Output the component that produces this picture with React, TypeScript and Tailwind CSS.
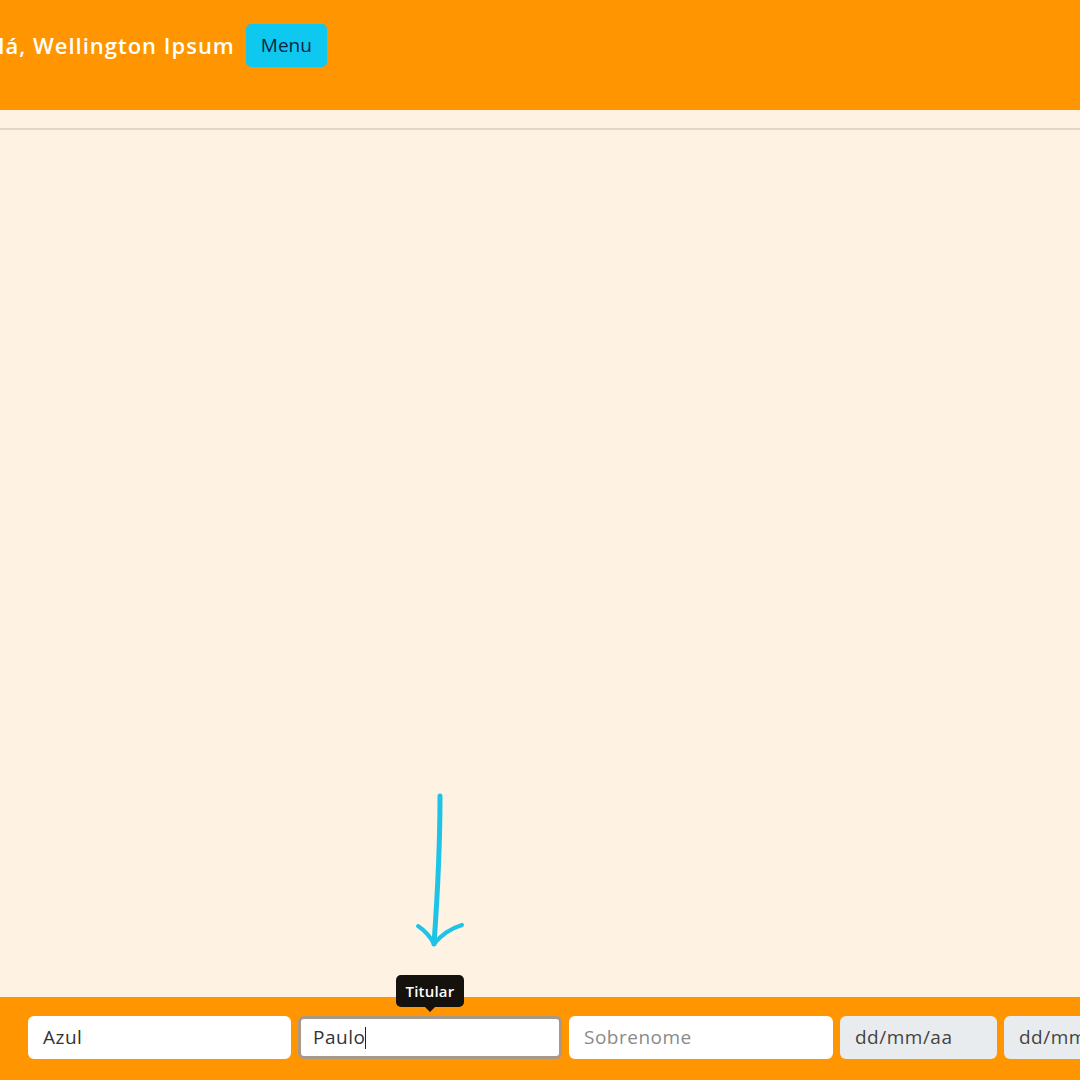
import React from "react";

export default function App() {
  const font = { fontFamily: '"Open Sans", "DejaVu Sans", sans-serif' };
  return (
    <div className="relative w-[1080px] h-[1080px] overflow-hidden bg-[#fef2e2] flex flex-col" style={font}>
      <header className="h-[110px] bg-[#ff9500] flex items-start pt-[24px] shrink-0">
        <div className="flex items-center gap-[11px] ml-[-20px]">
          <span className="text-white text-[22px] tracking-[1px] font-semibold leading-[43px] whitespace-nowrap">Olá, Wellington Ipsum</span>
          <button className="h-[43px] w-[81px] rounded-[5px] bg-[#0fc8ef] text-[#0b2545] text-[19px] flex items-center justify-center">Menu</button>
        </div>
      </header>
      <div className="h-[18px] shrink-0" />
      <div className="h-[2px] bg-[#e2d6c7] shrink-0" />
      <main className="flex-1" />
      <footer className="h-[83px] bg-[#ff9500] shrink-0 flex items-start pt-[19px] pl-[28px] gap-[7px]">
        <div className="w-[263px] h-[43px] shrink-0 rounded-[6px] bg-white flex items-center px-[15px] text-[19px] tracking-[0.5px] text-[#333]">Azul</div>
        <div className="relative w-[264px] h-[43px] shrink-0 rounded-[6px] bg-white border-[3px] border-[#a8988a] flex items-center px-[12px] text-[19px] tracking-[0.5px] text-[#333]">
          <span>Paulo</span>
          <span className="w-[1px] h-[22px] bg-[#222]" />
          <div className="absolute left-[95px] top-[-44px] w-[68px] h-[32px] rounded-[5px] bg-[#15110d] text-white text-[15px] tracking-[0.2px] font-semibold flex items-center justify-center">
            Titular
            <span className="absolute bottom-[-5px] left-[29px] w-0 h-0 border-l-[5px] border-r-[5px] border-t-[5px] border-l-transparent border-r-transparent border-t-[#15110d]" />
          </div>
        </div>
        <div className="w-[264px] h-[43px] shrink-0 rounded-[6px] bg-white flex items-center px-[15px] text-[19px] tracking-[0.5px] text-[#8a8a8a]">Sobrenome</div>
        <div className="w-[157px] h-[43px] shrink-0 rounded-[6px] bg-[#e9ecef] flex items-center px-[15px] text-[19px] tracking-[0.5px] text-[#444] whitespace-nowrap">dd/mm/aa</div>
        <div className="w-[157px] h-[43px] shrink-0 rounded-[6px] bg-[#e9ecef] flex items-center px-[15px] text-[19px] tracking-[0.5px] text-[#444] whitespace-nowrap">dd/mm/aa</div>
      </footer>
      <svg className="absolute left-[410px] top-[788px]" width="60" height="165" viewBox="0 0 60 165">
        <path d="M30 8 C 30 50, 28 100, 24 156" stroke="#1ec3e8" strokeWidth="5" fill="none" strokeLinecap="round" />
        <path d="M8 138 C 14 142, 20 148, 24 156 C 32 146, 42 140, 52 137" stroke="#1ec3e8" strokeWidth="4" fill="none" strokeLinecap="round" strokeLinejoin="round" />
      </svg>
    </div>
  );
}
